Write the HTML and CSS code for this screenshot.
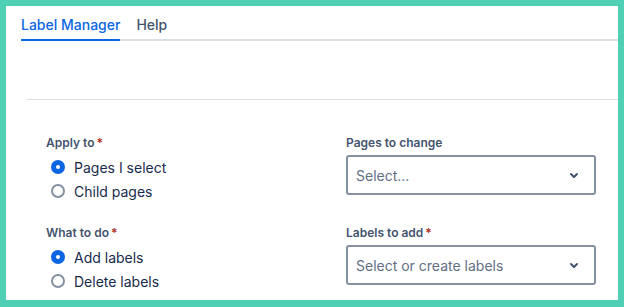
FILE: index.html
```html
<!DOCTYPE html>
<html lang="en">

<head>
    <meta charset="UTF-8">
    <meta name="viewport" content="width=device-width, initial-scale=1.0">
    <title>Label Manager</title>
    <link rel="stylesheet" href="styles.css">
</head>

<body>

    <div class="panel">
        <div class="tabs">
            <div class="tab active">Label Manager</div>
            <div class="tab">Help</div>
        </div>

        <div class="divider"></div>

        <form class="form">
            <div class="field">
                <div class="field-label">Apply to<span class="req">*</span></div>
                <label class="radio">
                    <span class="radio-dot checked"></span>
                    Pages I select
                </label>
                <label class="radio">
                    <span class="radio-dot"></span>
                    Child pages
                </label>
            </div>

            <div class="field">
                <div class="field-label">Pages to change</div>
                <div class="select">
                    <span class="placeholder">Select...</span>
                    <svg class="chevron" width="24" height="24" viewBox="0 0 24 24">
                        <path fill="currentColor" d="M8.292 10.293a1.009 1.009 0 000 1.419l2.939 2.965c.218.215.5.322.779.322s.556-.107.769-.322l2.93-2.955a1.01 1.01 0 000-1.419.987.987 0 00-1.406 0l-2.298 2.317-2.307-2.327a.99.99 0 00-1.406 0z"></path>
                    </svg>
                </div>
            </div>

            <div class="field">
                <div class="field-label">What to do<span class="req">*</span></div>
                <label class="radio">
                    <span class="radio-dot checked"></span>
                    Add labels
                </label>
                <label class="radio">
                    <span class="radio-dot"></span>
                    Delete labels
                </label>
            </div>

            <div class="field">
                <div class="field-label">Labels to add<span class="req">*</span></div>
                <div class="select">
                    <span class="placeholder">Select or create labels</span>
                    <svg class="chevron" width="24" height="24" viewBox="0 0 24 24">
                        <path fill="currentColor" d="M8.292 10.293a1.009 1.009 0 000 1.419l2.939 2.965c.218.215.5.322.779.322s.556-.107.769-.322l2.93-2.955a1.01 1.01 0 000-1.419.987.987 0 00-1.406 0l-2.298 2.317-2.307-2.327a.99.99 0 00-1.406 0z"></path>
                    </svg>
                </div>
            </div>
        </form>
    </div>

</body>

</html>
```

FILE: styles.css
```css
body {
    font-family: Inter, "Noto Sans", sans-serif;
    background-color: #4fcfb3;
    color: #172b4d;
    margin: 0;
    padding: 6px;
    height: 307px;
    box-sizing: border-box;
    overflow: hidden;
}

.panel {
    background-color: #fff;
    height: 294px;
    padding-top: 9px;
    box-sizing: border-box;
    overflow: hidden;
}

.tabs {
    display: flex;
    gap: 16px;
    margin-left: 15px;
    border-bottom: 2px solid #dcdfe4;
}

.tab {
    font-size: 14px;
    font-weight: 500;
    line-height: 20px;
    color: #44546f;
    padding-bottom: 4px;
    margin-bottom: -2px;
    border-bottom: 2px solid transparent;
}

.tab.active {
    color: #0c66e4;
    border-bottom-color: #0c66e4;
}

.divider {
    margin: 58px 0 0 20px;
    border-top: 1px solid #dcdfe4;
}

.form {
    display: grid;
    grid-template-columns: 300px 250px;
    row-gap: 22px;
    margin: 35px 0 0 40px;
}

.field-label {
    font-size: 12px;
    font-weight: 600;
    line-height: 16px;
    color: #44546f;
    margin-bottom: 4px;
}

.req {
    color: #ae2e24;
    margin-left: 2px;
}

.radio {
    display: flex;
    align-items: center;
    height: 24px;
    font-size: 14px;
    gap: 9px;
}

.radio-dot {
    width: 14px;
    height: 14px;
    margin-left: 5px;
    border: 2px solid #8590a2;
    border-radius: 50%;
    box-sizing: border-box;
    background-color: #fff;
}

.radio-dot.checked {
    border: 5px solid #0c66e4;
}

.select {
    display: flex;
    align-items: center;
    justify-content: space-between;
    height: 40px;
    border: 2px solid #8590a2;
    border-radius: 3px;
    box-sizing: border-box;
    padding: 0 8px;
}

.placeholder {
    font-size: 14px;
    color: #626f86;
}

.chevron {
    color: #44546f;
}
```
